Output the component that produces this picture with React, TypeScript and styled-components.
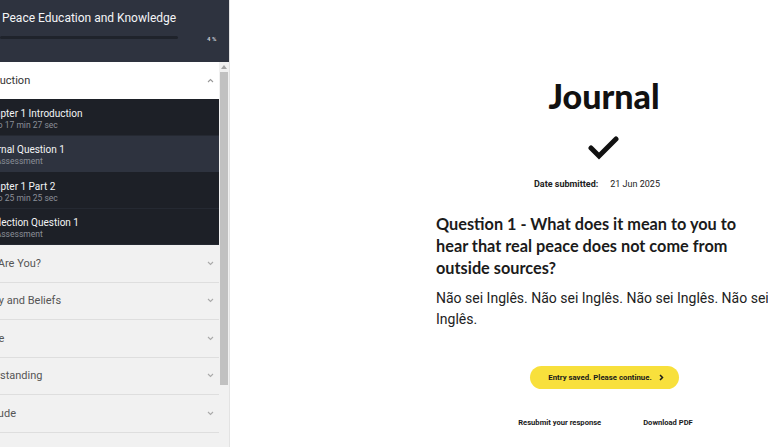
import React from "react";
import styled, { createGlobalStyle } from "styled-components";

const Global = createGlobalStyle`
  html, body { margin: 0; padding: 0; background: #fff; }
  body { font-family: Roboto, "Liberation Sans", sans-serif; overflow: hidden; }
  #root { width: 768px; height: 447px; overflow: hidden; }
`;

const Page = styled.div`
  display: flex;
  width: 768px;
  height: 447px;
  overflow: hidden;
`;

const Sidebar = styled.aside`
  flex: 0 0 230px;
  width: 230px;
  height: 447px;
  display: flex;
  flex-direction: column;
  overflow: hidden;
  border-right: 1px solid #e3e3e3;
  box-sizing: border-box;
`;

const Header = styled.div`
  flex: 0 0 62px;
  background: #2e333f;
  color: #fff;
  display: flex;
  flex-direction: column;
  padding: 10px 0 0 2px;
  box-sizing: border-box;
`;

const CourseTitle = styled.div`
  font-size: 12px;
  line-height: 16px;
  white-space: nowrap;
  color: #f4f5f7;
`;

const ProgressRow = styled.div`
  display: flex;
  align-items: center;
  margin: 6px 0 0 -2px;
  gap: 29px;
`;

const Track = styled.div`
  width: 178px;
  height: 3px;
  background: #1f232b;
  border-radius: 2px;
`;

const Percent = styled.span`
  font-size: 6px;
  font-weight: 700;
  color: #c9ccd2;
  margin-top: 3px;
`;

const ScrollArea = styled.div`
  flex: 1;
  display: flex;
  min-height: 0;
`;

const List = styled.div`
  flex: 1;
  min-width: 0;
  overflow: hidden;
  display: flex;
  flex-direction: column;
`;

const Section = styled.div<{ $open?: boolean }>`
  flex: 0 0 auto;
  height: ${(p) => (p.$open ? "37px" : "37.5px")};
  display: flex;
  align-items: center;
  justify-content: space-between;
  background: ${(p) => (p.$open ? "#ffffff" : "#f1f1f1")};
  border-bottom: 1px solid ${(p) => (p.$open ? "transparent" : "#dedede")};
  box-sizing: border-box;
  padding-right: 5px;
  font-size: 11px;
  color: ${(p) => (p.$open ? "#333" : "#555")};
  white-space: nowrap;
  overflow: hidden;
`;

const SectionLabel = styled.span<{ $shift: number }>`
  margin-left: ${(p) => p.$shift}px;
`;

const Chevron = styled.svg`
  width: 7px;
  height: 5px;
  flex: 0 0 auto;
`;

const Items = styled.div`
  background: #1d2027;
  display: flex;
  flex-direction: column;
`;

const Item = styled.div<{ $active?: boolean }>`
  height: 36.5px;
  background: ${(p) => (p.$active ? "#2e333f" : "transparent")};
  border-bottom: 1px solid ${(p) => (p.$active ? "transparent" : "#252932")};
  box-sizing: border-box;
  display: flex;
  flex-direction: column;
  justify-content: center;
  padding-top: 5px;
  white-space: nowrap;
  overflow: hidden;
`;

const ItemTitle = styled.span<{ $shift: number }>`
  margin-left: ${(p) => p.$shift}px;
  font-size: 10px;
  line-height: 12px;
  color: #f3f4f6;
`;

const ItemSub = styled.span<{ $shift: number }>`
  margin-left: ${(p) => p.$shift}px;
  font-size: 8.5px;
  line-height: 11px;
  color: #8b8f98;
`;

const Scrollbar = styled.div`
  flex: 0 0 10px;
  background: #f1f1f1;
  display: flex;
  flex-direction: column;
  align-items: center;
  padding-top: 3px;
  box-sizing: border-box;
`;

const ScrollArrow = styled.svg`
  width: 6px;
  height: 4px;
  margin-bottom: 3px;
`;

const Thumb = styled.div`
  width: 8px;
  height: 313px;
  background: #c1c1c1;
`;

const Main = styled.main`
  flex: 0 0 748px;
  display: flex;
  justify-content: center;
  background: #fff;
`;

const Content = styled.div`
  width: 336px;
  display: flex;
  flex-direction: column;
  padding-top: 74px;
`;

const Title = styled.h1`
  margin: 0;
  text-align: center;
  font-family: Lato, "Open Sans", sans-serif;
  font-weight: 900;
  font-size: 34px;
  line-height: 44px;
  color: #111;
`;

const CheckWrap = styled.div`
  display: flex;
  justify-content: center;
  margin-top: 18px;
`;

const DateRow = styled.div`
  display: flex;
  justify-content: center;
  gap: 12px;
  margin-top: 19px;
  padding-right: 14px;
  font-size: 9px;
  color: #222;
`;

const DateLabel = styled.span`
  font-weight: 700;
`;

const Question = styled.h2`
  margin: 24px 0 0 0;
  max-width: 318px;
  font-family: Lato, "Open Sans", sans-serif;
  font-weight: 700;
  font-size: 16.3px;
  line-height: 22px;
  color: #1b1b1b;
`;

const Answer = styled.p`
  margin: 9px -4px 0 0;
  font-size: 14px;
  line-height: 21px;
  color: #222;
`;

const ButtonRow = styled.div`
  display: flex;
  justify-content: center;
  margin-top: 36px;
`;

const ContinueButton = styled.button`
  width: 149px;
  height: 23px;
  border: none;
  border-radius: 12px;
  background: #f8e03c;
  font-family: Roboto, "Liberation Sans", sans-serif;
  font-weight: 700;
  font-size: 7.8px;
  color: #1a1a1a;
  display: flex;
  align-items: center;
  justify-content: center;
  gap: 7px;
  padding: 0 0 0 4px;
`;

const Links = styled.div`
  display: flex;
  justify-content: center;
  gap: 42px;
  margin-top: 29px;
  padding-left: 3px;
`;

const LinkText = styled.span`
  font-size: 7.6px;
  font-weight: 700;
  color: #1a1a1a;
`;

const Down = () => (
  <Chevron viewBox="0 0 7 5">
    <polyline points="1,1 3.5,3.5 6,1" fill="none" stroke="#aaa" strokeWidth="1.1" />
  </Chevron>
);
const Up = () => (
  <Chevron viewBox="0 0 7 5">
    <polyline points="1,4 3.5,1.5 6,4" fill="none" stroke="#999" strokeWidth="1.1" />
  </Chevron>
);

const items = [
  { t: "Chapter 1 Introduction", s: "Video 17 min 27 sec", ts: -17, ss: -19 },
  { t: "Journal Question 1", s: "Self Assessment", ts: -19, ss: -21, active: true },
  { t: "Chapter 1 Part 2", s: "Video 25 min 25 sec", ts: -17, ss: -19 },
  { t: "Reflection Question 1", s: "Self Assessment", ts: -16, ss: -21 },
];

const sections = [
  { t: "Who Are You?", s: -27 },
  { t: "History and Beliefs", s: -31 },
  { t: "Peace", s: -26 },
  { t: "Understanding", s: -29 },
  { t: "Gratitude", s: -29 },
  { t: "Forgiveness", s: -30 },
];

export default function App() {
  return (
    <>
      <Global />
      <Page>
        <Sidebar>
          <Header>
            <CourseTitle>Peace Education and Knowledge</CourseTitle>
            <ProgressRow>
              <Track />
              <Percent>4 %</Percent>
            </ProgressRow>
          </Header>
          <ScrollArea>
            <List>
              <Section $open>
                <SectionLabel $shift={-29}>Introduction</SectionLabel>
                <Up />
              </Section>
              <Items>
                {items.map((it) => (
                  <Item key={it.t} $active={it.active}>
                    <ItemTitle $shift={it.ts}>{it.t}</ItemTitle>
                    <ItemSub $shift={it.ss}>{it.s}</ItemSub>
                  </Item>
                ))}
              </Items>
              {sections.map((s) => (
                <Section key={s.t}>
                  <SectionLabel $shift={s.s}>{s.t}</SectionLabel>
                  <Down />
                </Section>
              ))}
            </List>
            <Scrollbar>
              <ScrollArrow viewBox="0 0 6 4">
                <polygon points="0,4 3,0 6,4" fill="#a3a3a3" />
              </ScrollArrow>
              <Thumb />
            </Scrollbar>
          </ScrollArea>
        </Sidebar>
        <Main>
          <Content>
            <Title>Journal</Title>
            <CheckWrap>
              <svg width="32" height="24" viewBox="0 0 32 24">
                <polyline
                  points="3,12 11,20 28,3"
                  fill="none"
                  stroke="#111"
                  strokeWidth="5"
                  strokeLinecap="round"
                  strokeLinejoin="miter"
                />
              </svg>
            </CheckWrap>
            <DateRow>
              <DateLabel>Date submitted:</DateLabel>
              <span>21 Jun 2025</span>
            </DateRow>
            <Question>
              Question 1 - What does it mean to you to hear that real peace does not come from outside sources?
            </Question>
            <Answer>Não sei Inglês. Não sei Inglês. Não sei Inglês. Não sei Inglês.</Answer>
            <ButtonRow>
              <ContinueButton>
                Entry saved. Please continue.
                <svg width="5" height="7" viewBox="0 0 5 7">
                  <polyline points="1,1 3.5,3.5 1,6" fill="none" stroke="#1a1a1a" strokeWidth="1.5" />
                </svg>
              </ContinueButton>
            </ButtonRow>
            <Links>
              <LinkText>Resubmit your response</LinkText>
              <LinkText>Download PDF</LinkText>
            </Links>
          </Content>
        </Main>
      </Page>
    </>
  );
}
